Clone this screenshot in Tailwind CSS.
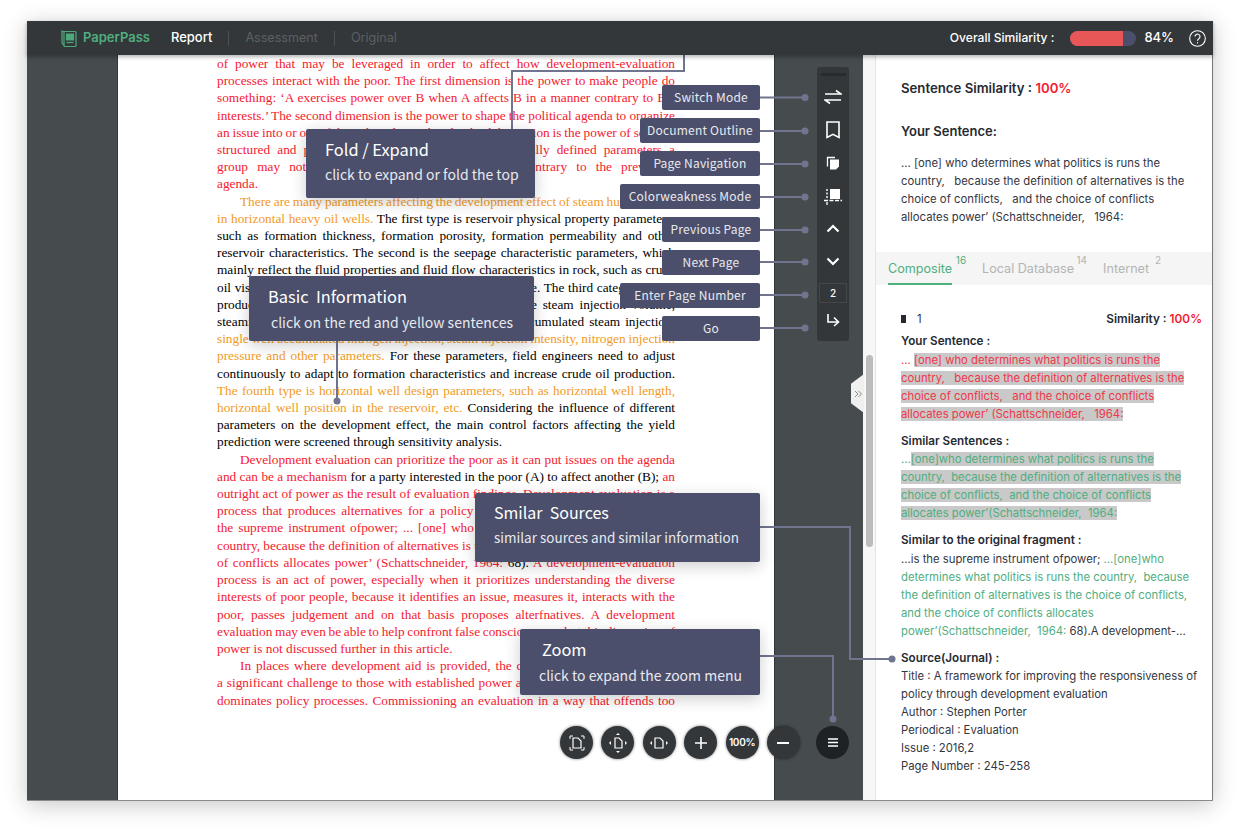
<!DOCTYPE html>
<html lang="en">
<head>
  <meta charset="UTF-8">
  <title>PaperPass Report</title>
  <script src="https://cdn.jsdelivr.net/npm/@tailwindcss/browser@4"></script>
</head>
<body class="relative w-[1240px] h-[835px] overflow-hidden bg-white pt-[21px] pl-[27px] font-['Inter',sans-serif]">

  <!-- Window -->
  <div class="w-[1186px] h-[780px] flex flex-col border-b border-[#8a8a8a] shadow-[0_4px_22px_rgba(0,0,0,0.22)]">

    <!-- Header -->
    <header class="relative z-10 h-[34px] shrink-0 bg-[#33373a] flex items-center text-[12.6px] shadow-[0_2px_4px_rgba(0,0,0,0.3)]">
      <svg class="ml-[34px] w-[16px] h-[18px]" viewBox="0 0 16 18" fill="none" stroke="#4fa87a" stroke-width="1.2">
        <path d="M3 2.5h11a1 1 0 0 1 1 1v13a1 1 0 0 1-1 1H4a1 1 0 0 1-1-1z"/>
        <path d="M3 3 1 2v12l2 2.5"/>
        <path d="M5.5 5h7v6h-7z" fill="#4fa87a"/>
        <path d="M5.5 13.5h7"/>
      </svg>
      <span class="ml-[6px] text-[13px] font-semibold text-[#4fae7f]">PaperPass</span>
      <span class="ml-[21px] text-[13px] text-white font-medium">Report</span>
      <span class="ml-[16px] w-px h-[15px] bg-[#4c5154]"></span>
      <span class="ml-[16px] text-[#5b6062]">Assessment</span>
      <span class="ml-[16px] w-px h-[15px] bg-[#4c5154]"></span>
      <span class="ml-[16px] text-[#5b6062]">Original</span>
      <span class="ml-auto text-[12.1px] text-white font-medium">Overall Similarity :</span>
      <div class="ml-[16px] w-[66px] h-[15px] rounded-full bg-[#4b4f6b] overflow-hidden">
        <div class="h-full w-[53px] bg-[#e85757]"></div>
      </div>
      <span class="ml-[8px] text-[13px] text-white font-medium">84%</span>
      <svg class="ml-[15px] mr-[7px] w-[17px] h-[17px]" viewBox="0 0 17 17" fill="none" stroke="#fff" stroke-width="1.1">
        <circle cx="8.5" cy="8.5" r="7.8"/>
        <path d="M6 6.6a2.5 2.5 0 1 1 3.8 2.1c-.9.6-1.3 1-1.3 2"/>
        <path d="M8.5 12.2v1.2"/>
      </svg>
    </header>

    <main class="flex-1 flex min-h-0">
      <!-- Left margin -->
      <div class="w-[90px] shrink-0 bg-[#464c4e]"></div>

      <!-- Document page -->
      <div class="w-[658px] shrink-0 bg-white pl-[100px] border-x border-[#33373a] overflow-hidden font-['Liberation_Serif',serif] text-[13.3px] leading-[17.2px] text-black">
        <div class="w-[458px] [text-align-last:justify] [word-spacing:-1px] -ml-px">
          <div class="text-[#f5202f]">
            <div>of power that may be leveraged in order to affect how development-evaluation</div>
            <div>processes interact with the poor. The first dimension is the power to make people do</div>
            <div>something: ‘A exercises power over B when A affects B in a manner contrary to B’s</div>
            <div>interests.’ The second dimension is the power to shape the political agenda to organize</div>
            <div>an issue into or out of the political agenda. The third dimension is the power of socially</div>
            <div>structured and patterned behaviour of groups and socially defined parameters a</div>
            <div>group may not even be aware of their interests, contrary to the prevailing</div>
            <div class="[text-align-last:left] [word-spacing:0]">agenda.</div>
          </div>
          <div class="pl-[23px] text-[#f29a1e]">There are many parameters affecting the development effect of steam huff and puff</div>
          <div><span class="text-[#f29a1e]">in horizontal heavy oil wells.</span> The first type is reservoir physical property parameters,</div>
          <div>such as formation thickness, formation porosity, formation permeability and other</div>
          <div>reservoir characteristics. The second is the seepage characteristic parameters, which</div>
          <div>mainly reflect the fluid properties and fluid flow characteristics in rock, such as crude</div>
          <div>oil viscosity and crude oil density of the reservoir and more. The third category is the</div>
          <div>production parameters of the steam injection, namely the steam injection volume,</div>
          <div>steaming time, soaking time, steam injection rate and accumulated steam injection,</div>
          <div class="text-[#f29a1e]">single well accumulated nitrogen injection, steam injection intensity, nitrogen injection</div>
          <div><span class="text-[#f29a1e]">pressure and other parameters.</span> For these parameters, field engineers need to adjust</div>
          <div>continuously to adapt to formation characteristics and increase crude oil production.</div>
          <div class="text-[#f29a1e]">The fourth type is horizontal well design parameters, such as horizontal well length,</div>
          <div><span class="text-[#f29a1e]">horizontal well position in the reservoir, etc.</span> Considering the influence of different</div>
          <div>parameters on the development effect, the main control factors affecting the yield</div>
          <div class="[text-align-last:left] [word-spacing:0]">prediction were screened through sensitivity analysis.</div>
          <div class="pl-[23px] text-[#f5202f]">Development evaluation can prioritize the poor as it can put issues on the agenda</div>
          <div><span class="text-[#f5202f]">and can be a mechanism</span> for a party interested in the poor (A) to affect another (B); <span class="text-[#f5202f]">an</span></div>
          <div class="text-[#f5202f]">
            <div>outright act of power as the result of evaluation findings. Development evaluation is a</div>
            <div>process that produces alternatives for a policy agenda, and agenda setting is itself</div>
            <div>the supreme instrument ofpower; ... [one] who determines what politics is runs the</div>
            <div>country, because the definition of alternatives is the choice of conflicts, and the choice</div>
            <div>of conflicts allocates power’ (Schattschneider, 1964: <span class="text-black">68).</span> A development-evaluation</div>
            <div>process is an act of power, especially when it prioritizes understanding the diverse</div>
            <div>interests of poor people, because it identifies an issue, measures it, interacts with the</div>
            <div>poor, passes judgement and on that basis proposes alterfnatives. A development</div>
            <div>evaluation may even be able to help confront false consciousness, but this dimension of</div>
            <div class="[text-align-last:left] [word-spacing:0]">power is not discussed further in this article.</div>
            <div class="pl-[23px]">In places where development aid is provided, the definition of alternatives is a</div>
            <div>a significant challenge to those with established power and an evaluation that is seen</div>
            <div>dominates policy processes. Commissioning an evaluation in a way that offends too</div>
          </div>
        </div>
      </div>

      <!-- Right margin with toolbars -->
      <div class="relative w-[88px] shrink-0 bg-[#464c4e]">
        <div class="absolute left-[42px] top-[12px] w-[32px] h-[274px] rounded-[3px] bg-[#33373a] flex flex-col items-center">
          <div class="mt-[6px] w-[25px] h-[3px] bg-[#282b2d]"></div>
          <div class="mt-[4px] h-[33px] flex items-center">
            <svg class="w-[18px] h-[18px]" viewBox="0 0 18 18" fill="none" stroke="#fff" stroke-width="1.6"><path d="M1 6h16l-5-3.5"/><path d="M17 12H1l5 3.5"/></svg>
          </div>
          <div class="h-[33px] flex items-center">
            <svg class="w-[16px] h-[18px]" viewBox="0 0 16 18" fill="none" stroke="#fff" stroke-width="1.6"><path d="M2 1h12v15.5l-6-3.2-6 3.2z"/></svg>
          </div>
          <div class="h-[33px] flex items-center">
            <svg class="w-[14px] h-[14px]" viewBox="0 0 14 14"><path d="M1.5 10.5V1.5H9" fill="none" stroke="#fff" stroke-width="1.3"/><path d="M4 3.5h9v7l-3 3H4z" fill="#fff"/></svg>
          </div>
          <div class="h-[33px] flex items-center">
            <svg class="w-[18px] h-[18px]" viewBox="0 0 18 18" fill="none" stroke="#fff"><rect x="6" y="2" width="10" height="10" fill="#fff" stroke="none"/><path d="M3 2v10" stroke-dasharray="2 1.5" stroke-width="1.4"/><path d="M0 13.5h18" stroke-dasharray="4 1.5" stroke-width="1.3"/><path d="M3 15v3" stroke-width="1.3"/></svg>
          </div>
          <div class="h-[33px] flex items-center">
            <svg class="w-[14px] h-[9px]" viewBox="0 0 14 9" fill="none" stroke="#fff" stroke-width="2.2"><path d="M1.5 7.5 7 2l5.5 5.5"/></svg>
          </div>
          <div class="h-[33px] flex items-center">
            <svg class="w-[14px] h-[9px]" viewBox="0 0 14 9" fill="none" stroke="#fff" stroke-width="2.2"><path d="M1.5 1.5 7 7l5.5-5.5"/></svg>
          </div>
          <div class="mt-[5px] w-[28px] h-[20px] border border-[#43474a] text-white text-[10px] font-medium flex items-center justify-center">2</div>
          <div class="h-[34px] flex items-center">
            <svg class="w-[14px] h-[14px]" viewBox="0 0 14 14" fill="none" stroke="#fff" stroke-width="1.6"><path d="M2 1v8h10"/><path d="M8 4.5 12.5 9 8 13"/></svg>
          </div>
        </div>
      </div>

      <!-- Scroll gutter -->
      <div class="relative w-[13px] shrink-0 bg-[#f7f7f7] border-r border-[#e4e4e4]">
        <div class="absolute left-[3px] top-[300px] w-[7px] h-[192px] rounded-full bg-[#bcbcbc]"></div>
      </div>

      <!-- Result panel -->
      <aside class="flex-1 min-w-0 bg-white border-r border-[#777] text-[11.3px] leading-[18px] text-[#33363f]">
        <div class="pl-[25px] pt-[24px] h-[197px]">
          <p class="text-[13.2px] font-semibold text-[#262a33]">Sentence Similarity : <span class="text-[#f5202f]">100%</span></p>
          <p class="mt-[25px] text-[13px] font-semibold text-[#262a33]">Your Sentence:</p>
          <p class="mt-[14px]">... [one] who determines what politics is runs the<br>country,&nbsp;&nbsp;&nbsp;because the definition of alternatives is the<br>choice of conflicts,&nbsp;&nbsp;&nbsp;and the choice of conflicts<br>allocates power’ (Schattschneider,&nbsp;&nbsp;&nbsp;1964:</p>
        </div>
        <div class="h-[33px] bg-[#f5f5f5] pl-[12px] flex items-start text-[12.6px] leading-[20px] text-[#b4b4b4]">
          <div class="relative h-full pt-[7px] text-[#4fae7f] border-b-2 border-[#4fae7f]">Composite<sup class="absolute -right-[14px] top-[3px] text-[10px] leading-none">16</sup></div>
          <div class="relative ml-[30px] pt-[7px]">Local Database<sup class="absolute -right-[13px] top-[3px] text-[10px] leading-none">14</sup></div>
          <div class="relative ml-[29px] pt-[7px]">Internet<sup class="absolute -right-[12px] top-[3px] text-[10px] leading-none">2</sup></div>
        </div>
        <div class="pl-[25px] pr-[10px] pt-[25px]">
          <div class="flex items-center h-[18px]">
            <span class="w-[5px] h-[8px] bg-[#262a33]"></span>
            <span class="ml-[11px]">1</span>
            <span class="ml-auto text-[11.8px] font-semibold text-[#262a33]">Similarity : <span class="text-[#f5202f]">100%</span></span>
          </div>
          <p class="mt-[4px] text-[11.7px] font-semibold text-[#262a33]">Your Sentence :</p>
          <p class="mt-px text-[#f0364a]">... <span class="bg-[#c9c9c9]">[one] who determines what politics is runs the<br>country,&nbsp;&nbsp;&nbsp;because the definition of alternatives is the<br>choice of conflicts,&nbsp;&nbsp;&nbsp;and the choice of conflicts<br>allocates power’ (Schattschneider,&nbsp;&nbsp;&nbsp;1964:</span></p>
          <p class="mt-[9px] text-[11.7px] font-semibold text-[#262a33]">Similar Sentences :</p>
          <p class="text-[#4fae7f]">...<span class="bg-[#c9c9c9]">[one]who determines what politics is runs the<br>country,&nbsp;&nbsp;because the definition of alternatives is the<br>choice of conflicts,&nbsp;&nbsp;and the choice of conflicts<br>allocates power’(Schattschneider,&nbsp;&nbsp;1964:</span></p>
          <p class="mt-[9px] text-[11.7px] font-semibold text-[#262a33]">Similar to the original fragment :</p>
          <p class="mt-px">...is the supreme instrument ofpower; <span class="text-[#4fae7f]">...[one]who<br>determines what politics is runs the country,&nbsp;&nbsp;because<br>the definition of alternatives is the choice of conflicts,<br>and the choice of conflicts allocates<br>power’(Schattschneider,&nbsp;&nbsp;1964:</span> 68).A development-...</p>
          <p class="mt-[9px] text-[11.7px] font-semibold text-[#262a33]">Source(Journal) :</p>
          <p>Title : A framework for improving the responsiveness of<br>policy through development evaluation</p>
          <p>Author : Stephen Porter</p>
          <p>Periodical : Evaluation</p>
          <p>Issue : 2016,2</p>
          <p>Page Number : 245-258</p>
        </div>
      </aside>
    </main>
  </div>

  <!-- Fold tab in header -->
  <div class="absolute left-[662px] top-[21px] w-[40px] h-[14px] bg-[#484c50] [clip-path:polygon(0_0,100%_0,80%_100%,20%_100%)] flex justify-center pt-[2px]">
    <svg class="w-[8px] h-[9px]" viewBox="0 0 8 9" fill="none" stroke="#a5a8ab"><path d="M1 1l3 3 3-3M1 5l3 3 3-3"/></svg>
  </div>

  <!-- Panel collapse handle -->
  <div class="absolute left-[851px] top-[374px] w-[13px] h-[39px] bg-[#f0f0f0] [clip-path:polygon(0_25%,100%_0,100%_100%,0_75%)] flex items-center justify-center">
    <svg class="w-[8px] h-[8px]" viewBox="0 0 8 8" fill="none" stroke="#8a8a8a"><path d="M1 1l3 3-3 3M4.5 1l3 3-3 3"/></svg>
  </div>

  <!-- Annotation connectors -->
  <svg class="absolute left-0 top-0 w-[1240px] h-[835px] pointer-events-none" viewBox="0 0 1240 835" fill="none" stroke="#70748f" stroke-width="2">
    <path d="M684 38V71H512V130"/>
    <path d="M337 340V401"/>
    <path d="M760 527H850V659H892"/>
    <path d="M760 656H833V719"/>
    <path d="M760 97.5H805M760 131H805M760 164H805M760 197H805M760 230H805M760 262H805M760 295H805M760 328H805"/>
    <g fill="#70748f" stroke="none">
      <circle cx="684" cy="38" r="3.5"/><circle cx="337" cy="401" r="3.5"/><circle cx="892" cy="659" r="3.5"/><circle cx="833" cy="719" r="3.5"/>
      <circle cx="805" cy="97.5" r="3.5"/><circle cx="805" cy="131" r="3.5"/><circle cx="805" cy="164" r="3.5"/><circle cx="805" cy="197" r="3.5"/>
      <circle cx="805" cy="230" r="3.5"/><circle cx="805" cy="262" r="3.5"/><circle cx="805" cy="295" r="3.5"/><circle cx="805" cy="328" r="3.5"/>
    </g>
  </svg>

  <!-- Zoom buttons -->
  <div class="absolute left-[560px] top-[726px] flex gap-[8.4px] text-white">
    <button class="w-[33px] h-[33px] rounded-full bg-[#33373a] shadow-[0_0_3px_rgba(0,0,0,0.55)] flex items-center justify-center">
      <svg class="w-[16px] h-[16px]" viewBox="0 0 16 16" fill="none" stroke="#fff" stroke-width="1"><path d="M1 4V1h3M12 1h3v3M15 12v3h-3M4 15H1v-3"/><path d="M4 3h5l3 3v7H4z" stroke-width="1.2"/></svg>
    </button>
    <button class="w-[33px] h-[33px] rounded-full bg-[#33373a] shadow-[0_0_3px_rgba(0,0,0,0.55)] flex items-center justify-center">
      <svg class="w-[18px] h-[20px]" viewBox="0 0 18 20" fill="#fff"><path d="M6 5h4l3 3v7H6z" fill="none" stroke="#fff" stroke-width="1.2"/><path d="M9 0l2 2H7zM9 20l-2-2h4zM0 10l2-2v4zM18 10l-2 2V8z"/></svg>
    </button>
    <button class="w-[33px] h-[33px] rounded-full bg-[#33373a] shadow-[0_0_3px_rgba(0,0,0,0.55)] flex items-center justify-center">
      <svg class="w-[18px] h-[12px]" viewBox="0 0 18 12" fill="#fff"><path d="M5 1h5l3 3v7H5z" fill="none" stroke="#fff" stroke-width="1.2"/><path d="M0 6l2-2v4zM18 6l-2 2V4z"/></svg>
    </button>
    <button class="w-[33px] h-[33px] rounded-full bg-[#33373a] shadow-[0_0_3px_rgba(0,0,0,0.55)] flex items-center justify-center">
      <svg class="w-[12px] h-[12px]" viewBox="0 0 12 12" stroke="#fff" stroke-width="1.6"><path d="M6 0v12M0 6h12"/></svg>
    </button>
    <button class="w-[33px] h-[33px] rounded-full bg-[#33373a] shadow-[0_0_3px_rgba(0,0,0,0.55)] flex items-center justify-center text-[10px] font-semibold tracking-[-0.3px]">100%</button>
    <button class="w-[33px] h-[33px] rounded-full bg-[#33373a] shadow-[0_0_3px_rgba(0,0,0,0.55)] flex items-center justify-center">
      <svg class="w-[12px] h-[2px]" viewBox="0 0 12 2" stroke="#fff" stroke-width="2"><path d="M0 1h12"/></svg>
    </button>
    <button class="ml-[8px] w-[33px] h-[33px] rounded-full bg-[#1f2224] flex items-center justify-center">
      <svg class="w-[10px] h-[9px]" viewBox="0 0 10 9" stroke="#fff" stroke-width="1.5"><path d="M0 1h10M0 4.5h10M0 8h10"/></svg>
    </button>
  </div>

  <!-- Big callouts -->
  <div class="font-['Noto_Sans_CJK_SC','Noto_Sans',sans-serif] text-white">
    <div class="absolute left-[306px] top-[129px] w-[229px] h-[69px] rounded-[2px] bg-[#4b4f6b] shadow-[0_4px_16px_rgba(0,0,0,0.2)] pl-[19px] pt-[8px]">
      <p class="text-[16.4px] leading-[24px]">Fold / Expand</p>
      <p class="mt-[2px] text-[14px] leading-[22px] text-[#e8e9ef]">click to expand or fold the top</p>
    </div>
    <div class="absolute left-[249px] top-[276px] w-[285px] h-[65px] rounded-[2px] bg-[#4b4f6b] shadow-[0_4px_16px_rgba(0,0,0,0.2)] pl-[19px] pt-[8px]">
      <p class="text-[16.4px] leading-[24px] whitespace-pre">Basic  Information</p>
      <p class="ml-[3px] mt-[3px] text-[14px] leading-[22px] text-[#e8e9ef]">click on the red and yellow sentences</p>
    </div>
    <div class="absolute left-[475px] top-[493px] w-[285px] h-[69px] rounded-[2px] bg-[#4b4f6b] shadow-[0_4px_16px_rgba(0,0,0,0.2)] pl-[19px] pt-[7px]">
      <p class="text-[16px] leading-[24px] whitespace-pre">Smilar  Sources</p>
      <p class="mt-[2px] text-[13.5px] leading-[22px] text-[#e8e9ef]">similar sources and similar information</p>
    </div>
    <div class="absolute left-[520px] top-[629px] w-[240px] h-[66px] rounded-[2px] bg-[#4b4f6b] shadow-[0_4px_16px_rgba(0,0,0,0.2)] pl-[19px] pt-[8px]">
      <p class="ml-[3px] text-[16.4px] leading-[24px]">Zoom</p>
      <p class="mt-[3px] text-[14px] leading-[22px] text-[#e8e9ef]">click to expand the zoom menu</p>
    </div>

    <!-- Toolbar labels -->
    <div class="absolute right-[480px] top-[85px] flex flex-col items-end gap-[8px] text-[12px] text-[#e8e9ef] tracking-[0.2px]">
      <div class="w-[98px] h-[25px] pb-[2px] rounded-[2px] bg-[#4b4f6b] flex items-center justify-center">Switch Mode</div>
      <div class="w-[120px] h-[25px] pb-[2px] rounded-[2px] bg-[#4b4f6b] flex items-center justify-center">Document Outline</div>
      <div class="w-[120px] h-[25px] pb-[2px] rounded-[2px] bg-[#4b4f6b] flex items-center justify-center">Page Navigation</div>
      <div class="w-[140px] h-[25px] pb-[2px] rounded-[2px] bg-[#4b4f6b] flex items-center justify-center">Colorweakness Mode</div>
      <div class="w-[98px] h-[25px] pb-[2px] rounded-[2px] bg-[#4b4f6b] flex items-center justify-center">Previous Page</div>
      <div class="w-[98px] h-[25px] pb-[2px] rounded-[2px] bg-[#4b4f6b] flex items-center justify-center">Next Page</div>
      <div class="w-[140px] h-[25px] pb-[2px] rounded-[2px] bg-[#4b4f6b] flex items-center justify-center">Enter Page Number</div>
      <div class="w-[98px] h-[25px] pb-[2px] rounded-[2px] bg-[#4b4f6b] flex items-center justify-center">Go</div>
    </div>
  </div>
</body>
</html>
